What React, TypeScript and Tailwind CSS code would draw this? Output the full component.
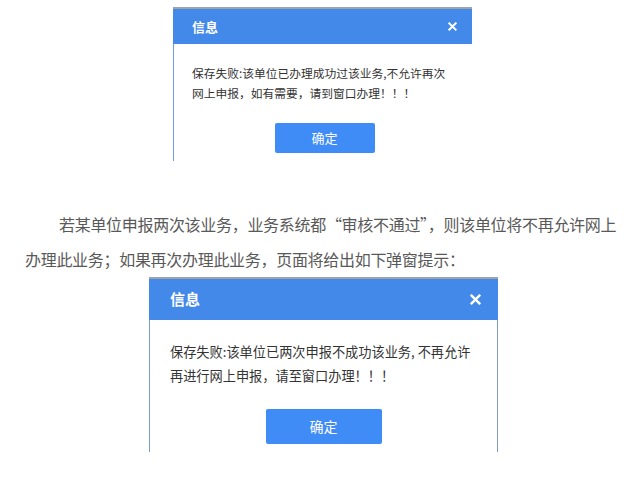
import React from 'react';

const font = { fontFamily: '"Noto Sans CJK SC", "Noto Sans", sans-serif' };

function CloseIcon({ size }: { size: number }) {
    return (
        <svg width={size} height={size} viewBox="0 0 10 10" fill="none" stroke="white" strokeWidth={2.2} strokeLinecap="square">
            <path d="M1.5 1.5 L8.5 8.5 M8.5 1.5 L1.5 8.5" />
        </svg>
    );
}

export default function App() {
    return (
        <div className="w-[638px] h-[498px] bg-white overflow-hidden" style={font}>
            {/* First dialog (cropped at the bottom) */}
            <div className="pt-[7px] pl-[173px]">
                <div className="w-[299px]">
                    <div className="h-[2px] bg-[#9ea3aa]" />
                    <div className="h-[35px] bg-[#4289e9] flex items-center justify-between pl-[19px] pr-[15px]">
                        <span className="text-white text-[13px] font-bold">信息</span>
                        <CloseIcon size={9} />
                    </div>
                    <div className="h-[117px] border-l border-[#6f9be0] pt-[19px]">
                        <p className="pl-[18px] text-[11.75px] leading-[20px] text-[#333]">
                            保存失败:该单位已办理成功过该业务,不允许再次
                            <br />
                            网上申报，如有需要，请到窗口办理！！！
                        </p>
                        <div className="flex justify-center mt-[20px] pl-[3px]">
                            <button className="w-[100px] h-[30px] bg-[#3f8cf6] rounded-[2px] text-white text-[13px]">确定</button>
                        </div>
                    </div>
                </div>
            </div>

            {/* Paragraph */}
            <p className="mt-[46px] pl-[25px] text-[16px] leading-[35px] tracking-[-0.3px] text-[#595959] indent-[34px] whitespace-nowrap">
                若某单位申报两次该业务，业务系统都“审核不通过”，则该单位将不再允许网上
                <br />
                办理此业务；如果再次办理此业务，页面将给出如下弹窗提示：
            </p>

            {/* Second dialog */}
            <div className="pl-[149px]">
                <div className="w-[349px]">
                    <div className="h-[2px] bg-[#9ea3aa]" />
                    <div className="h-[41px] bg-[#4289e9] flex items-center justify-between pl-[21px] pr-[17px]">
                        <span className="text-white text-[15px] font-bold">信息</span>
                        <CloseIcon size={11} />
                    </div>
                    <div className="h-[132px] border-x border-[#7f9cc4] pt-[20px]">
                        <p className="pl-[20px] text-[13.2px] leading-[24px] text-[#333]">
                            保存失败:该单位已两次申报不成功该业务, 不再允许
                            <br />
                            再进行网上申报，请至窗口办理！！！
                        </p>
                        <div className="flex justify-center mt-[21px]">
                            <button className="w-[116px] h-[35px] bg-[#3f8cf6] rounded-[2px] text-white text-[14px]">确定</button>
                        </div>
                    </div>
                </div>
            </div>
        </div>
    );
}
